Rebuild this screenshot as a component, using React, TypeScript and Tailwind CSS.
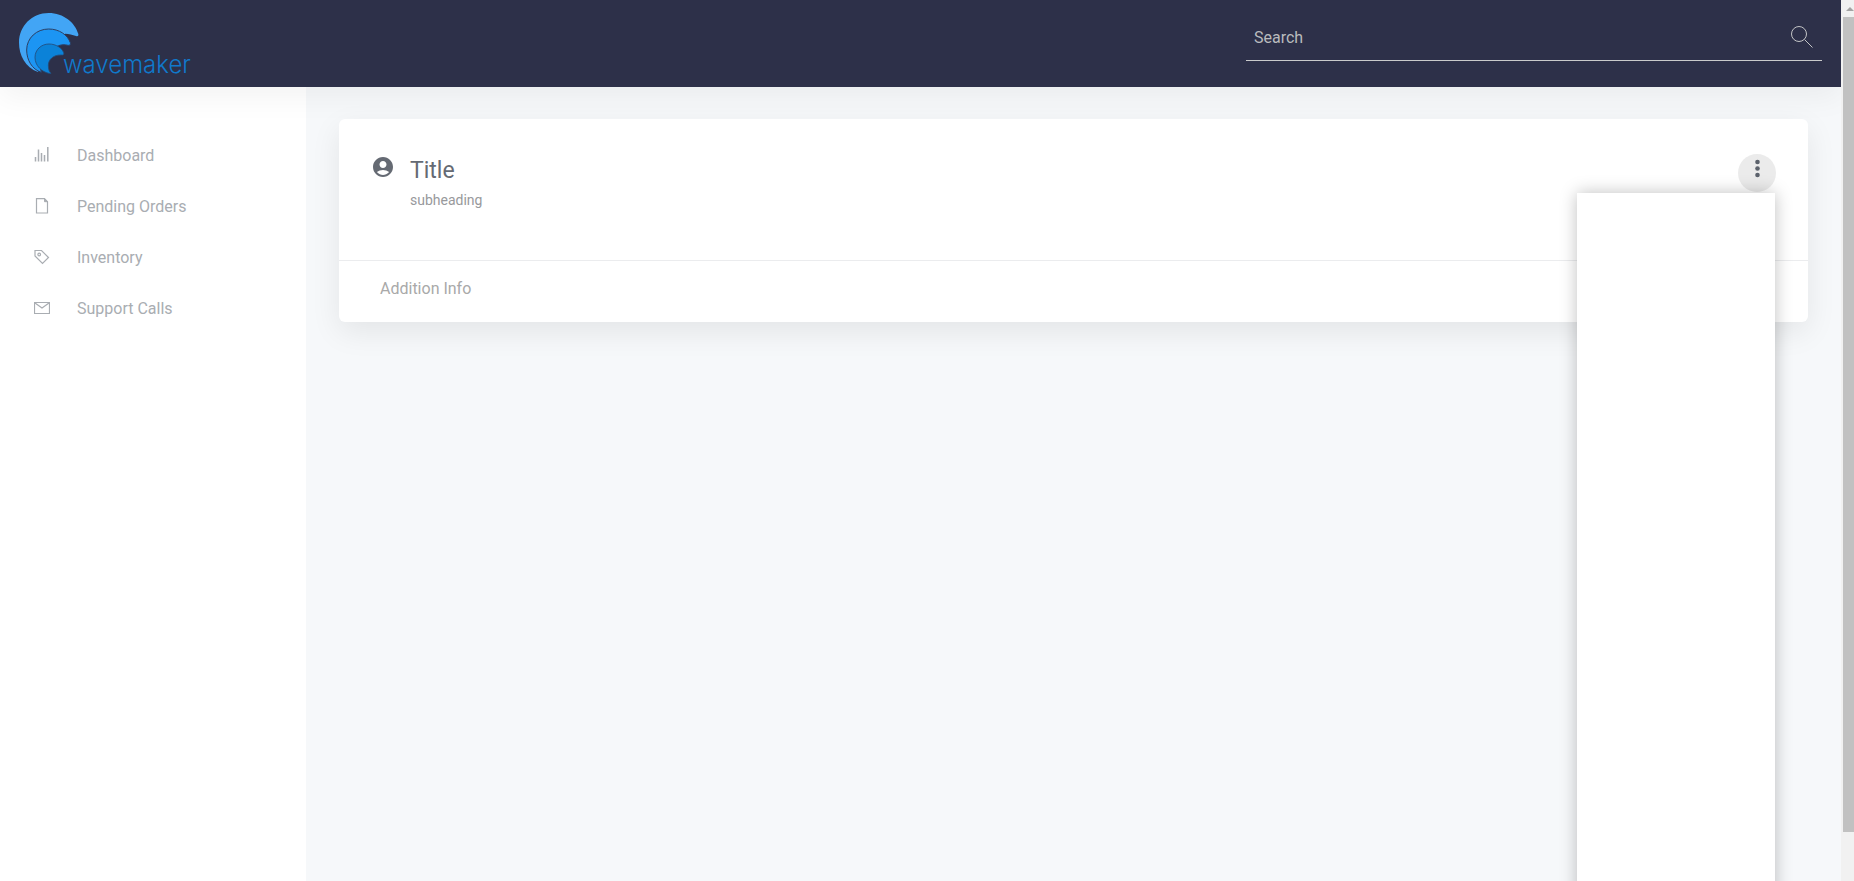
import { MdAccountCircle } from "react-icons/md";
import type { ReactNode } from "react";

const navItems: { label: string; icon: ReactNode }[] = [
  {
    label: "Dashboard",
    icon: (
      <path
        strokeWidth="1.5"
        d="M1.500 10v4.500M4.500 2.500v12M7.500 6v8.500M10.500 8v6.500M13.800 0v14.500"
      />
    ),
  },
  {
    label: "Pending Orders",
    icon: (
      <>
        <path strokeWidth="1.2" d="M2.500.700h8l3 3v11.300h-11z" />
        <path d="M10.500.700v3h3z" fill="currentColor" />
      </>
    ),
  },
  {
    label: "Inventory",
    icon: (
      <>
        <path strokeWidth="1.2" d="M1 1.500h6.500l7 7-6 6-7.500-7.500z" />
        <circle cx="5.2" cy="5.5" r="1.3" strokeWidth="1.2" />
      </>
    ),
  },
  {
    label: "Support Calls",
    icon: (
      <>
        <path strokeWidth="1.2" d="M.500 2.500h15v11h-15z" />
        <path strokeWidth="1.2" d="M1 3l7 5 7-5" />
      </>
    ),
  },
];

function Logo() {
  return (
    <a href="#" className="flex items-end" aria-label="wavemaker">
      <svg viewBox="9 9 180 183" className="h-[61px] w-[60px] shrink-0">
        <path
          fill="#42a5f5"
          d="M66 186C28 172 9 135 9 98 9 48 48 9 98 9c45 0 79 29 89 63 1 6-2 8-7 6-10-4-22-6-32-7L98 100 60 130z"
        />
        <path
          fill="#1c95f3"
          stroke="#2d3f63"
          strokeWidth="3"
          d="M76 187C48 178 32 150 32 120c0-36 30-63 66-63 32 0 57 18 65 41 2 6-2 9-7 8-10-3-20-2-28 1l-28 13-30 40z"
        />
        <path
          fill="#0b82d8"
          stroke="#244a78"
          strokeWidth="2.5"
          d="M103 191c-27-4-46-25-46-49 0-23 19-40 42-40 21 0 39 12 44 26 2 6-2 8-7 7-23-1-39 13-39 31 0 12 3 20 8 24z"
        />
      </svg>
      <span className="-ml-4 font-['Inter'] text-[24px]/[18px] font-light text-[#1079cb]">
        wavemaker
      </span>
    </a>
  );
}

function Header() {
  return (
    <header className="relative z-10 flex h-[87px] shrink-0 items-start justify-between bg-[#2d3049] px-[19px] pt-[13px] shadow-[0_10px_30px_rgba(0,0,0,0.05)]">
      <Logo />
      <form className="flex h-12 w-[576px] items-center border-b border-[#c9cacb] px-2">
        <input
          type="text"
          aria-label="Search"
          placeholder="Search"
          className="min-w-0 flex-1 bg-transparent pt-[2px] text-base text-white outline-none placeholder:text-[#b9bbbd]"
        />
        <button type="button" aria-label="Submit search">
          <svg
            viewBox="0 0 24 24"
            className="size-6 text-[#c3c4c6]"
            fill="none"
            stroke="currentColor"
          >
            <circle cx="9" cy="9" r="7.5" />
            <path d="M14.500 14.500l8 8" />
          </svg>
        </button>
      </form>
    </header>
  );
}

function Sidebar() {
  return (
    <nav className="w-[306px] shrink-0 bg-white pt-[43px]">
      <ul>
        {navItems.map(({ label, icon }) => (
          <li key={label}>
            <a
              href="#"
              className="flex h-[51px] items-center gap-[27px] pl-[34px] text-base text-[#a9adb2]"
            >
              <svg
                viewBox="0 0 16 17"
                className="h-[17px] w-4"
                fill="none"
                stroke="currentColor"
              >
                {icon}
              </svg>
              {label}
            </a>
          </li>
        ))}
      </ul>
    </nav>
  );
}

function Card() {
  return (
    <section className="rounded-md bg-white shadow-[0_10px_30px_rgba(0,0,0,0.08)]">
      <div className="flex h-[141px] items-start px-8 pt-[35px]">
        <MdAccountCircle className="mt-px size-6 text-[#656a73]" />
        <div className="ml-[15px] flex-1">
          <h1 className="text-[23px]/[34px] text-[#656a73]">Title</h1>
          <p className="text-sm/6 text-[#98999c]">subheading</p>
        </div>
        <div className="relative">
          <button
            type="button"
            aria-label="More actions"
            aria-expanded="true"
            className="flex size-[38px] justify-center rounded-full bg-[#ebebeb] pt-1 text-[#5c626c]"
          >
            <svg viewBox="0 0 24 24" className="size-6" fill="currentColor">
              <circle cx="12.5" cy="4" r="2.3" />
              <circle cx="12.5" cy="10.5" r="2.3" />
              <circle cx="12.5" cy="17" r="2.3" />
            </svg>
          </button>
          <div
            role="menu"
            className="absolute top-full right-px z-20 mt-px h-screen w-[198px] bg-white shadow-[0_0_16px_rgba(0,0,0,0.25)]"
          />
        </div>
      </div>
      <footer className="border-t border-[#ebecee] px-[41px] pt-4 pb-[21px] text-base text-[#a9a9a9]">
        Addition Info
      </footer>
    </section>
  );
}

function ScrollTrack() {
  return (
    <div className="flex w-[13px] shrink-0 flex-col items-end overflow-hidden bg-[#f1f1f1]">
      <svg viewBox="0 0 8 17" className="h-[17px] w-2 shrink-0" fill="#a3a3a3">
        <path d="M0 11l4-4 4 4z" />
      </svg>
      <div className="h-[92.5%] w-[11px] bg-[#c1c1c1]" />
    </div>
  );
}

export default function App() {
  return (
    <div className="flex h-screen overflow-hidden font-['Roboto',sans-serif]">
      <div className="flex min-w-0 flex-1 flex-col overflow-hidden">
        <Header />
        <div className="flex flex-1">
          <Sidebar />
          <main className="min-w-0 flex-1 bg-[#f6f8fa] px-[33px] pt-8">
            <Card />
          </main>
        </div>
      </div>
      <ScrollTrack />
    </div>
  );
}
